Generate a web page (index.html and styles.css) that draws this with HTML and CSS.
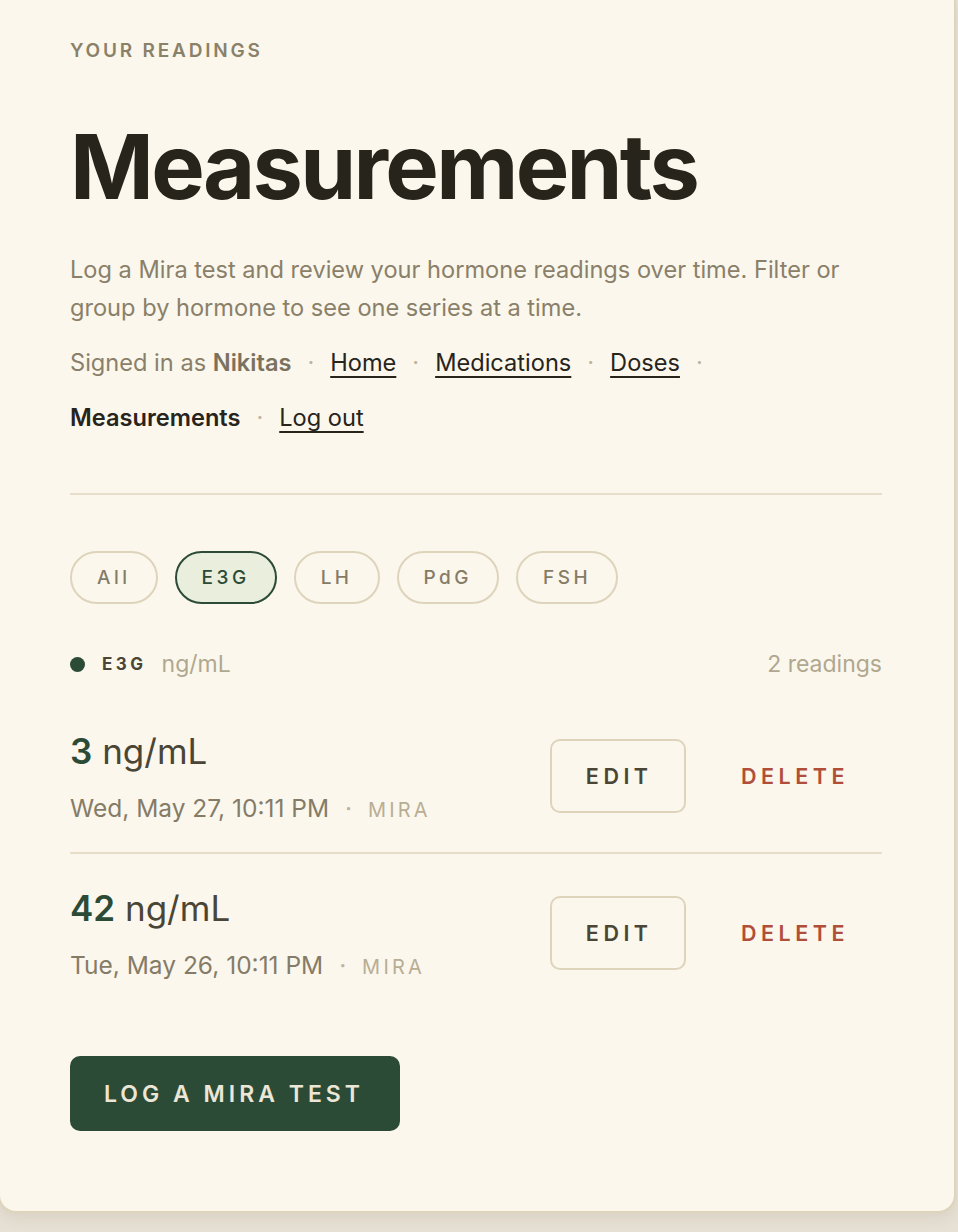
FILE: index.html
```html
<!DOCTYPE html>
<html lang="en">
<head>
    <meta charset="UTF-8">
    <meta name="viewport" content="width=device-width, initial-scale=1.0">
    <title>Measurements</title>
    <link rel="stylesheet" href="styles.css">
</head>
<body>
    <main class="card">
        <p class="eyebrow">Your readings</p>
        <h1>Measurements</h1>
        <p class="intro">Log a Mira test and review your hormone readings over time. Filter or group by hormone to see one series at a time.</p>

        <nav class="nav">
            <span class="nav-item">Signed in as <strong>Nikitas</strong></span>
            <span class="sep">&middot;</span>
            <a href="#" class="nav-item">Home</a>
            <span class="sep">&middot;</span>
            <a href="#" class="nav-item">Medications</a>
            <span class="sep">&middot;</span>
            <a href="#" class="nav-item">Doses</a>
            <span class="sep">&middot;</span>
            <span class="nav-item current">Measurements</span>
            <span class="sep">&middot;</span>
            <a href="#" class="nav-item">Log out</a>
        </nav>

        <hr class="divider">

        <div class="chips">
            <button class="chip">All</button>
            <button class="chip active">E3G</button>
            <button class="chip">LH</button>
            <button class="chip">PdG</button>
            <button class="chip">FSH</button>
        </div>

        <div class="series">
            <div class="series-name">
                <span class="dot"></span>
                <span class="hormone">E3G</span>
                <span class="unit">ng/mL</span>
            </div>
            <span class="count">2 readings</span>
        </div>

        <ul class="readings">
            <li class="reading">
                <div class="reading-info">
                    <div class="value"><b>3</b> ng/mL</div>
                    <div class="meta">Wed, May 27, 10:11 PM <span class="sep">&middot;</span> <span class="source">Mira</span></div>
                </div>
                <div class="actions">
                    <button class="btn-edit">Edit</button>
                    <button class="btn-delete">Delete</button>
                </div>
            </li>
            <li class="reading">
                <div class="reading-info">
                    <div class="value"><b>42</b> ng/mL</div>
                    <div class="meta">Tue, May 26, 10:11 PM <span class="sep">&middot;</span> <span class="source">Mira</span></div>
                </div>
                <div class="actions">
                    <button class="btn-edit">Edit</button>
                    <button class="btn-delete">Delete</button>
                </div>
            </li>
        </ul>

        <button class="btn-primary">Log a Mira test</button>
    </main>
</body>
</html>
```

FILE: styles.css
```css
* {
    box-sizing: border-box;
}

body {
    margin: 0;
    background: #e7e1d5;
    font-family: 'Inter', sans-serif;
    color: #27241c;
    min-height: 1232px;
}

.card {
    display: block;
    width: 958px;
    margin-left: -2px;
    padding: 41px 72px 80px 70px;
    background: #fbf7ed;
    border: 2px solid #ddd4bb;
    border-top: none;
    border-radius: 0 0 18px 18px;
    box-shadow: 0 6px 14px rgba(120, 105, 75, 0.12);
}

.eyebrow {
    margin: 0;
    font-size: 19px;
    line-height: 1;
    font-weight: 600;
    letter-spacing: 2.8px;
    text-transform: uppercase;
    color: #8a8169;
}

h1 {
    margin: 57px 0 0;
    font-size: 90px;
    line-height: 1.1;
    font-weight: 700;
    letter-spacing: -2.7px;
    color: #27241c;
}

.intro {
    margin: 35px 0 0;
    font-size: 23.6px;
    line-height: 38px;
    color: #8a8069;
}

.nav {
    display: flex;
    flex-wrap: wrap;
    align-items: center;
    column-gap: 16px;
    row-gap: 24px;
    margin-top: 20px;
    font-size: 23.6px;
    line-height: 31px;
}

.nav-item {
    color: #8a8069;
}

.nav-item strong {
    font-weight: 600;
    color: #7a725e;
}

.nav a.nav-item {
    color: #27241c;
    text-decoration: underline;
    text-underline-offset: 5px;
    text-decoration-thickness: 1.5px;
}

.nav .current {
    font-weight: 600;
    color: #27241c;
}

.sep {
    color: #bdb49c;
}

.divider {
    margin: 60px 0 0;
    border: none;
    border-top: 2px solid #e6dec8;
}

.chips {
    display: flex;
    gap: 17px;
    margin-top: 56px;
}

.chip {
    height: 53px;
    padding: 0 25px;
    border: 2px solid #ddd4bb;
    border-radius: 27px;
    background: transparent;
    font-family: inherit;
    font-size: 19px;
    font-weight: 500;
    letter-spacing: 3.5px;
    color: #857c66;
    cursor: pointer;
}

.chip.active {
    background: #e9eedd;
    border-color: #2c4b36;
    color: #2c4b36;
}

.series {
    display: flex;
    justify-content: space-between;
    align-items: center;
    margin-top: 46px;
}

.series-name {
    display: flex;
    align-items: center;
}

.dot {
    width: 15px;
    height: 15px;
    border-radius: 50%;
    background: #2c4b36;
}

.hormone {
    margin-left: 17px;
    font-size: 17px;
    font-weight: 700;
    letter-spacing: 3.5px;
    color: #4a4535;
}

.unit {
    margin-left: 15px;
    font-size: 23px;
    color: #b0a78f;
}

.count {
    font-size: 23px;
    color: #b0a78f;
}

.readings {
    list-style: none;
    margin: 19px 0 0;
    padding: 0;
}

.reading {
    display: flex;
    justify-content: space-between;
    align-items: center;
    padding: 34px 0 29px;
    border-bottom: 2px solid #e6dec8;
}

.reading:last-child {
    border-bottom: none;
}

.value {
    font-size: 35px;
    line-height: 40px;
    color: #4a4535;
}

.value b {
    font-weight: 600;
    color: #2c4b36;
}

.meta {
    margin-top: 22px;
    font-size: 24.5px;
    color: #857c68;
}

.meta .sep {
    margin: 0 9px;
}

.source {
    font-size: 20px;
    letter-spacing: 3.2px;
    text-transform: uppercase;
    color: #b8ae94;
}

.actions {
    display: flex;
    gap: 20px;
    margin-bottom: 3px;
}

.btn-edit, .btn-delete {
    height: 74px;
    padding: 0 31px 0 33.5px;
    border: 2px solid #ddd4bb;
    border-radius: 10px;
    background: transparent;
    font-family: inherit;
    font-size: 21.5px;
    font-weight: 600;
    letter-spacing: 4.5px;
    text-transform: uppercase;
    color: #4a4535;
    cursor: pointer;
}

.btn-delete {
    border-color: transparent;
    color: #b04e3a;
}

.btn-primary {
    margin-top: 47px;
    height: 75px;
    padding: 0 36px 0 34px;
    border: none;
    border-radius: 10px;
    background: #2c4b36;
    font-family: inherit;
    font-size: 23px;
    font-weight: 600;
    letter-spacing: 4px;
    text-transform: uppercase;
    color: #ece6d6;
    cursor: pointer;
}
```
